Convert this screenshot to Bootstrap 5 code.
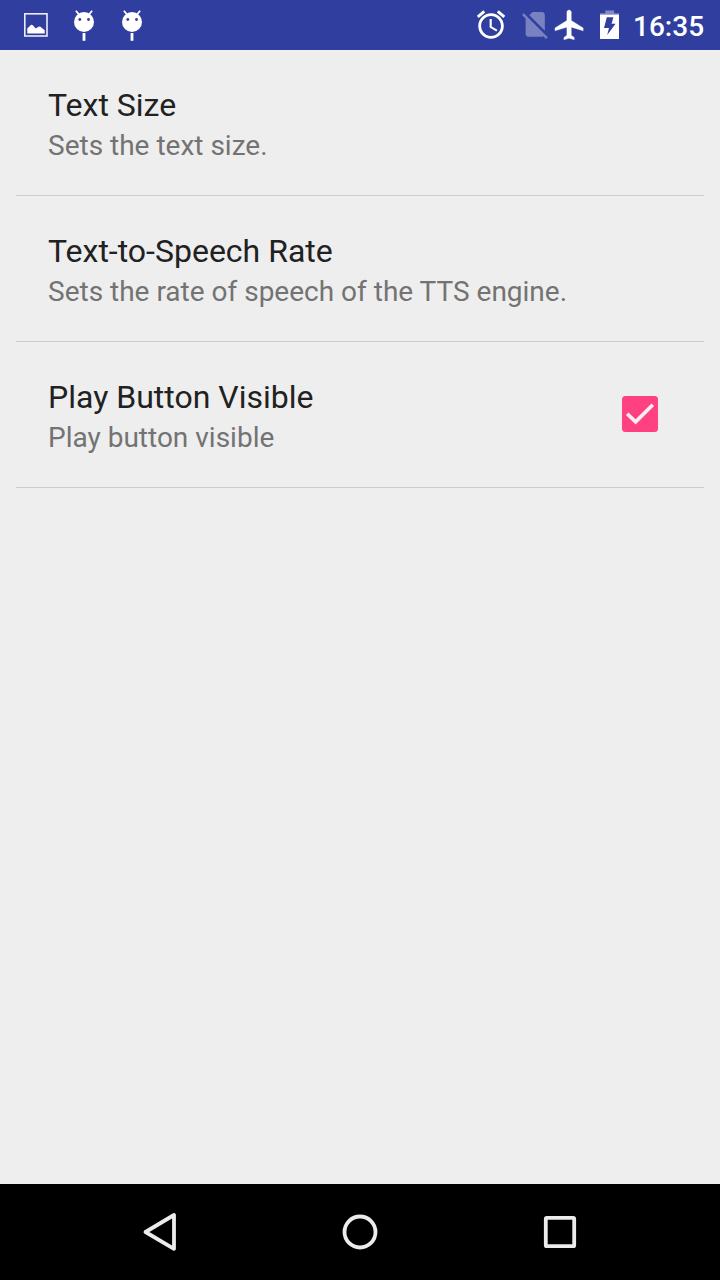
<!DOCTYPE html>
<html lang="en">
<head>
<meta charset="utf-8">
<meta name="viewport" content="width=device-width, initial-scale=1">
<title>Settings</title>
<link href="https://cdn.jsdelivr.net/npm/bootstrap@5.3.0/dist/css/bootstrap.min.css" rel="stylesheet">
<style>
  body { font-family: Roboto, "Noto Sans", sans-serif; background: #eee; height: 1280px; overflow: hidden; }
  svg { display: block; flex: none; }
  .status-bar { height: 50px; background: #303f9f; color: #fff; }
  .clock { font-size: 28px; font-weight: 500; line-height: 50px; width: 88px; padding: 2px 0 0 1px; height: 50px; white-space: nowrap; }
  .prefs { padding: 0 16px; }
  .list-group > .list-group-item.pref { height: 146px; padding: 35px 46px 0 32px; background: transparent; border: 0; border-bottom: 1px solid #cdcdcd; border-radius: 0; }
  .pref-title { font-size: 32px; line-height: 40px; color: #212121; }
  .pref-summary { font-size: 28px; line-height: 42px; color: #737373; }
  .pref-check { margin-top: 19px; }
  .nav-keys { height: 96px; background: #000; padding: 0 60px; }
</style>
</head>
<body class="d-flex flex-column">
  <header class="status-bar d-flex justify-content-between">
    <div class="d-flex">
      <svg width="60" height="50" viewBox="0 0 60 50">
        <rect x="24.8" y="13.8" width="22.2" height="22.2" fill="none" stroke="#fff" stroke-opacity=".9" stroke-width="1.6"/>
        <path d="M27.3 33.5v-5l3.8-3.7 1.4.3 3.3 3.4 3-1.9 1.6.1 4.3 3.6v3.2z" fill="#fff"/>
      </svg>
      <svg width="48" height="50" viewBox="60 0 48 50">
        <path d="M75.9 10.7l2.9 3.5M92.1 10.7l-2.9 3.5" stroke="#fff" stroke-width="1.8"/>
        <circle cx="84" cy="22" r="10" fill="#fff"/>
        <circle cx="79.8" cy="19.5" r="1.4" fill="#303f9f"/><circle cx="88.5" cy="19.5" r="1.4" fill="#303f9f"/>
        <path d="M84 33v7.8" stroke="#fff" stroke-width="2.8"/>
      </svg>
      <svg width="48" height="50" viewBox="60 0 48 50">
        <path d="M75.9 10.7l2.9 3.5M92.1 10.7l-2.9 3.5" stroke="#fff" stroke-width="1.8"/>
        <circle cx="84" cy="22" r="10" fill="#fff"/>
        <circle cx="79.8" cy="19.5" r="1.4" fill="#303f9f"/><circle cx="88.5" cy="19.5" r="1.4" fill="#303f9f"/>
        <path d="M84 33v7.8" stroke="#fff" stroke-width="2.8"/>
      </svg>
    </div>
    <div class="d-flex">
      <svg width="44" height="50" viewBox="470 0 44 50">
        <path transform="translate(474 7.6) scale(1.42)" fill="#fff" d="M22 5.72l-4.6-3.86-1.29 1.53 4.6 3.86L22 5.72zM7.88 3.39L6.6 1.86 2 5.71l1.29 1.53 4.59-3.85zM12.5 8H11v6l4.75 2.85.75-1.23-4-2.37V8zM12 4c-4.97 0-9 4.03-9 9s4.02 9 9 9c4.97 0 9-4.03 9-9s-4.03-9-9-9zm0 16c-3.87 0-7-3.13-7-7s3.13-7 7-7 7 3.13 7 7-3.13 7-7 7z"/>
      </svg>
      <svg width="37" height="50" viewBox="514 0 37 50">
        <path transform="translate(518.8 7.9) scale(1.37)" fill="#fff" fill-opacity=".35" d="M18.99 5c0-1.1-.89-2-1.99-2h-7L7.66 5.34 19 16.68 18.99 5zM3.65 3.88L2.38 5.15 5 7.77V19c0 1.1.9 2 2 2h10.01c.35 0 .67-.1.96-.26l1.88 1.88 1.27-1.27L3.65 3.88z"/>
      </svg>
      <svg width="39" height="50" viewBox="551 0 39 50">
        <path transform="translate(552 7.1) scale(1.485)" fill="#fff" stroke="#fff" stroke-width=".2" d="M21 16v-2l-8-5V3.5c0-.83-.67-1.5-1.5-1.5S10 2.67 10 3.5V9l-8 5v2l8-2.5V19l-2 1.5V22l3.5-1 3.5 1v-1.5L13 19v-5.5l8 2.5z"/>
      </svg>
      <svg width="42" height="50" viewBox="590 0 42 50">
        <path d="M605.3 10.4h8.8v2.8h4.9v1.8h-19v-1.8h5.3z" fill="#fff" fill-opacity=".4"/>
        <path d="M600 14.7h19V39h-19z" fill="#fff"/>
        <path d="M606.8 17.2h6.6l-1.8 6.6h4l-8.4 11.3 1.8-7.2h-5z" fill="#303f9f"/>
      </svg>
      <div class="clock">16:35</div>
    </div>
  </header>

  <main class="prefs flex-grow-1">
    <div class="list-group">
      <div class="list-group-item pref">
        <div class="pref-title">Text Size</div>
        <div class="pref-summary">Sets the text size.</div>
      </div>
      <div class="list-group-item pref">
        <div class="pref-title">Text-to-Speech Rate</div>
        <div class="pref-summary">Sets the rate of speech of the TTS engine.</div>
      </div>
      <div class="list-group-item pref d-flex justify-content-between align-items-start">
        <div>
          <div class="pref-title">Play Button Visible</div>
          <div class="pref-summary">Play button visible</div>
        </div>
        <svg class="pref-check" width="36" height="36" viewBox="0 0 36 36" role="img" aria-label="Checked">
          <rect width="36" height="36" rx="3.5" fill="#ff4081"/>
          <path d="M5.2 17.7l8.4 8.2L30.8 8.8" fill="none" stroke="#fbeef2" stroke-width="3.6"/>
        </svg>
      </div>
    </div>
  </main>

  <nav class="nav-keys d-flex">
    <svg width="200" height="96" viewBox="60 1184 200 96"><path d="M174 1215v33.8L145.5 1232z" fill="none" stroke="#ececec" stroke-width="3.8" stroke-linejoin="round"/></svg>
    <svg width="200" height="96" viewBox="260 1184 200 96"><circle cx="360" cy="1232" r="15.5" fill="none" stroke="#ececec" stroke-width="3.8"/></svg>
    <svg width="200" height="96" viewBox="460 1184 200 96"><rect x="545.8" y="1217.8" width="28.4" height="28.4" rx="1" fill="none" stroke="#ececec" stroke-width="3.8"/></svg>
  </nav>
<script src="https://cdn.jsdelivr.net/npm/bootstrap@5.3.0/dist/js/bootstrap.bundle.min.js"></script>
</body>
</html>
